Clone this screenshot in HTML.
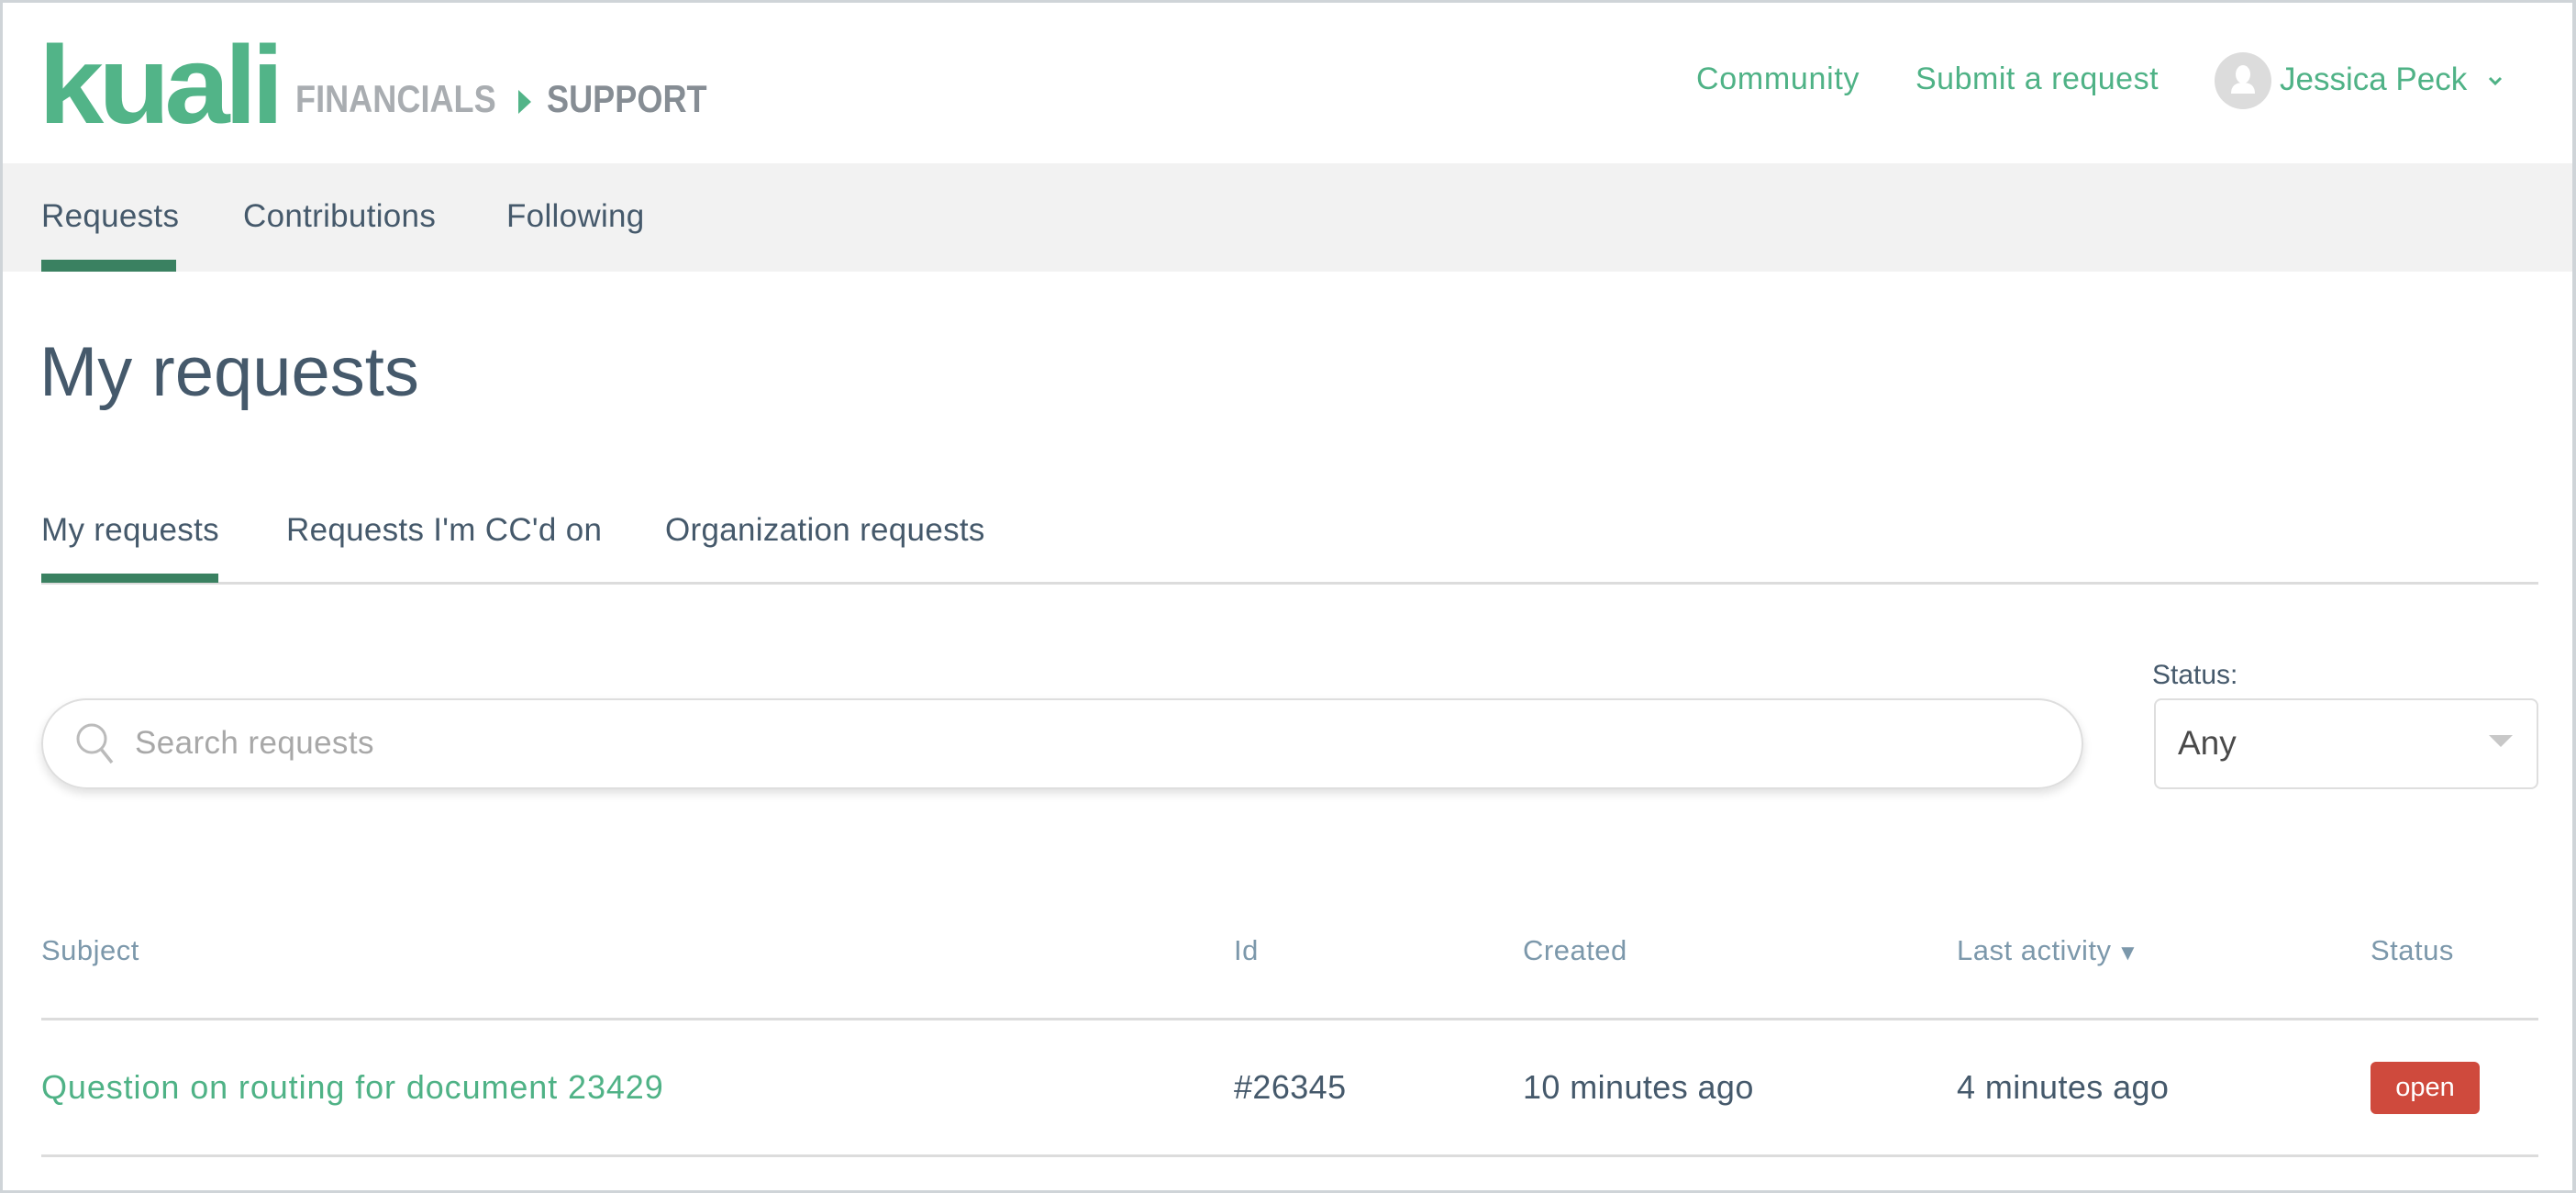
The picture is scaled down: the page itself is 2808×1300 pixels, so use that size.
<!DOCTYPE html>
<html><head><meta charset="utf-8"><style>
*{margin:0;padding:0;box-sizing:border-box}
html,body{width:2808px;height:1300px;overflow:hidden;background:#fff}
body{font-family:"Liberation Sans",sans-serif;position:relative;color:#45596b}
.frame{position:absolute;left:0;top:0;width:2808px;height:1300px;border:3px solid #cfd4d8;border-right-width:4px;pointer-events:none;z-index:10}
.a{position:absolute;white-space:nowrap}
.g{color:#4fb286}
.logo{left:42px;top:14px;font-size:128px;font-weight:bold;color:#52b488;letter-spacing:-6px;line-height:150px;transform:scaleY(0.94);transform-origin:bottom}
.nav{position:absolute;left:0;top:178px;width:2808px;height:118px;background:#f2f2f2}
.th{font-size:31px;color:#7c98ab;top:1018px;letter-spacing:0.5px}
.td{font-size:36px;top:1164px;color:#45596b;letter-spacing:0.4px}
.n{font-size:35px;letter-spacing:0.3px}
</style></head><body>
<div class="frame"></div>
<div class="a logo">kuali</div>
<div class="a" style="left:322px;top:84px;font-size:42px;font-weight:bold;color:#a9adb1;transform:scaleX(0.86);transform-origin:left">FINANCIALS</div>
<svg class="a" style="left:563px;top:96px" width="18" height="30"><path d="M2 2 L16 15 L2 28Z" fill="#52b488"/></svg>
<div class="a" style="left:596px;top:84px;font-size:42px;font-weight:bold;color:#868d94;transform:scaleX(0.86);transform-origin:left">SUPPORT</div>

<div class="a g" style="left:1849px;top:67px;font-size:34px;letter-spacing:0.7px">Community</div>
<div class="a g" style="left:2088px;top:67px;font-size:34px;letter-spacing:0.5px">Submit a request</div>
<svg class="a" style="left:2414px;top:57px" width="62" height="62"><circle cx="31" cy="31" r="31" fill="#dcdcdc"/><ellipse cx="31" cy="24" rx="8" ry="10" fill="#fff"/><path d="M18 45 Q18 33 31 33 Q44 33 44 45Z" fill="#fff"/></svg>
<div class="a g" style="left:2485px;top:67px;font-size:35px;letter-spacing:0px">Jessica Peck</div>
<svg class="a" style="left:2710px;top:80px" width="20" height="16"><path d="M4 5 L10 11 L16 5" stroke="#4fb286" stroke-width="3" fill="none"/></svg>

<div class="nav"></div>
<div class="a n" style="left:45px;top:216px">Requests</div>
<div class="a n" style="left:265px;top:216px">Contributions</div>
<div class="a n" style="left:552px;top:216px">Following</div>
<div class="a" style="left:45px;top:283px;width:147px;height:13px;background:#3a8161"></div>

<div class="a" style="left:43px;top:362px;font-size:76px;letter-spacing:0px">My requests</div>

<div class="a n" style="left:45px;top:558px">My requests</div>
<div class="a n" style="left:312px;top:558px">Requests I'm CC'd on</div>
<div class="a n" style="left:725px;top:558px">Organization requests</div>
<div class="a" style="left:45px;top:634px;width:2722px;height:3px;background:#dcdcdc"></div>
<div class="a" style="left:45px;top:625px;width:193px;height:10px;background:#3a8161"></div>

<div class="a" style="left:2346px;top:719px;font-size:30px">Status:</div>
<div class="a" style="left:45px;top:761px;width:2226px;height:99px;border:2px solid #dedede;border-radius:50px;box-shadow:0 5px 10px rgba(0,0,0,0.12)"></div>
<svg class="a" style="left:80px;top:785px" width="50" height="50"><circle cx="20" cy="20" r="15" stroke="#bbb" stroke-width="3" fill="none"/><path d="M30 31 L42 46" stroke="#bbb" stroke-width="3.5"/></svg>
<div class="a" style="left:147px;top:790px;font-size:35px;color:#a8a8a8;letter-spacing:0.4px">Search requests</div>
<div class="a" style="left:2348px;top:761px;width:419px;height:99px;border:2px solid #dedede;border-radius:8px"></div>
<div class="a" style="left:2374px;top:789px;font-size:37px;color:#4a4a4a">Any</div>
<svg class="a" style="left:2713px;top:800px" width="26" height="16"><path d="M0 1 H26 L13 14Z" fill="#c8c8c8"/></svg>

<div class="a th" style="left:45px">Subject</div>
<div class="a th" style="left:1345px">Id</div>
<div class="a th" style="left:1660px">Created</div>
<div class="a th" style="left:2133px">Last activity<span style="font-size:24px;margin-left:6px">▼</span></div>
<div class="a th" style="left:2584px">Status</div>
<div class="a" style="left:45px;top:1109px;width:2722px;height:3px;background:#dcdcdc"></div>
<div class="a td g" style="left:45px;color:#4fb286;letter-spacing:0.9px">Question on routing for document 23429</div>
<div class="a td" style="left:1345px">#26345</div>
<div class="a td" style="left:1660px">10 minutes ago</div>
<div class="a td" style="left:2133px">4 minutes ago</div>
<div class="a" style="left:2584px;top:1157px;width:119px;height:57px;background:#cf4a3d;border-radius:6px;color:#fff;font-size:29px;text-align:center;line-height:57px">open</div>
<div class="a" style="left:45px;top:1258px;width:2722px;height:3px;background:#dcdcdc"></div>
</body></html>
